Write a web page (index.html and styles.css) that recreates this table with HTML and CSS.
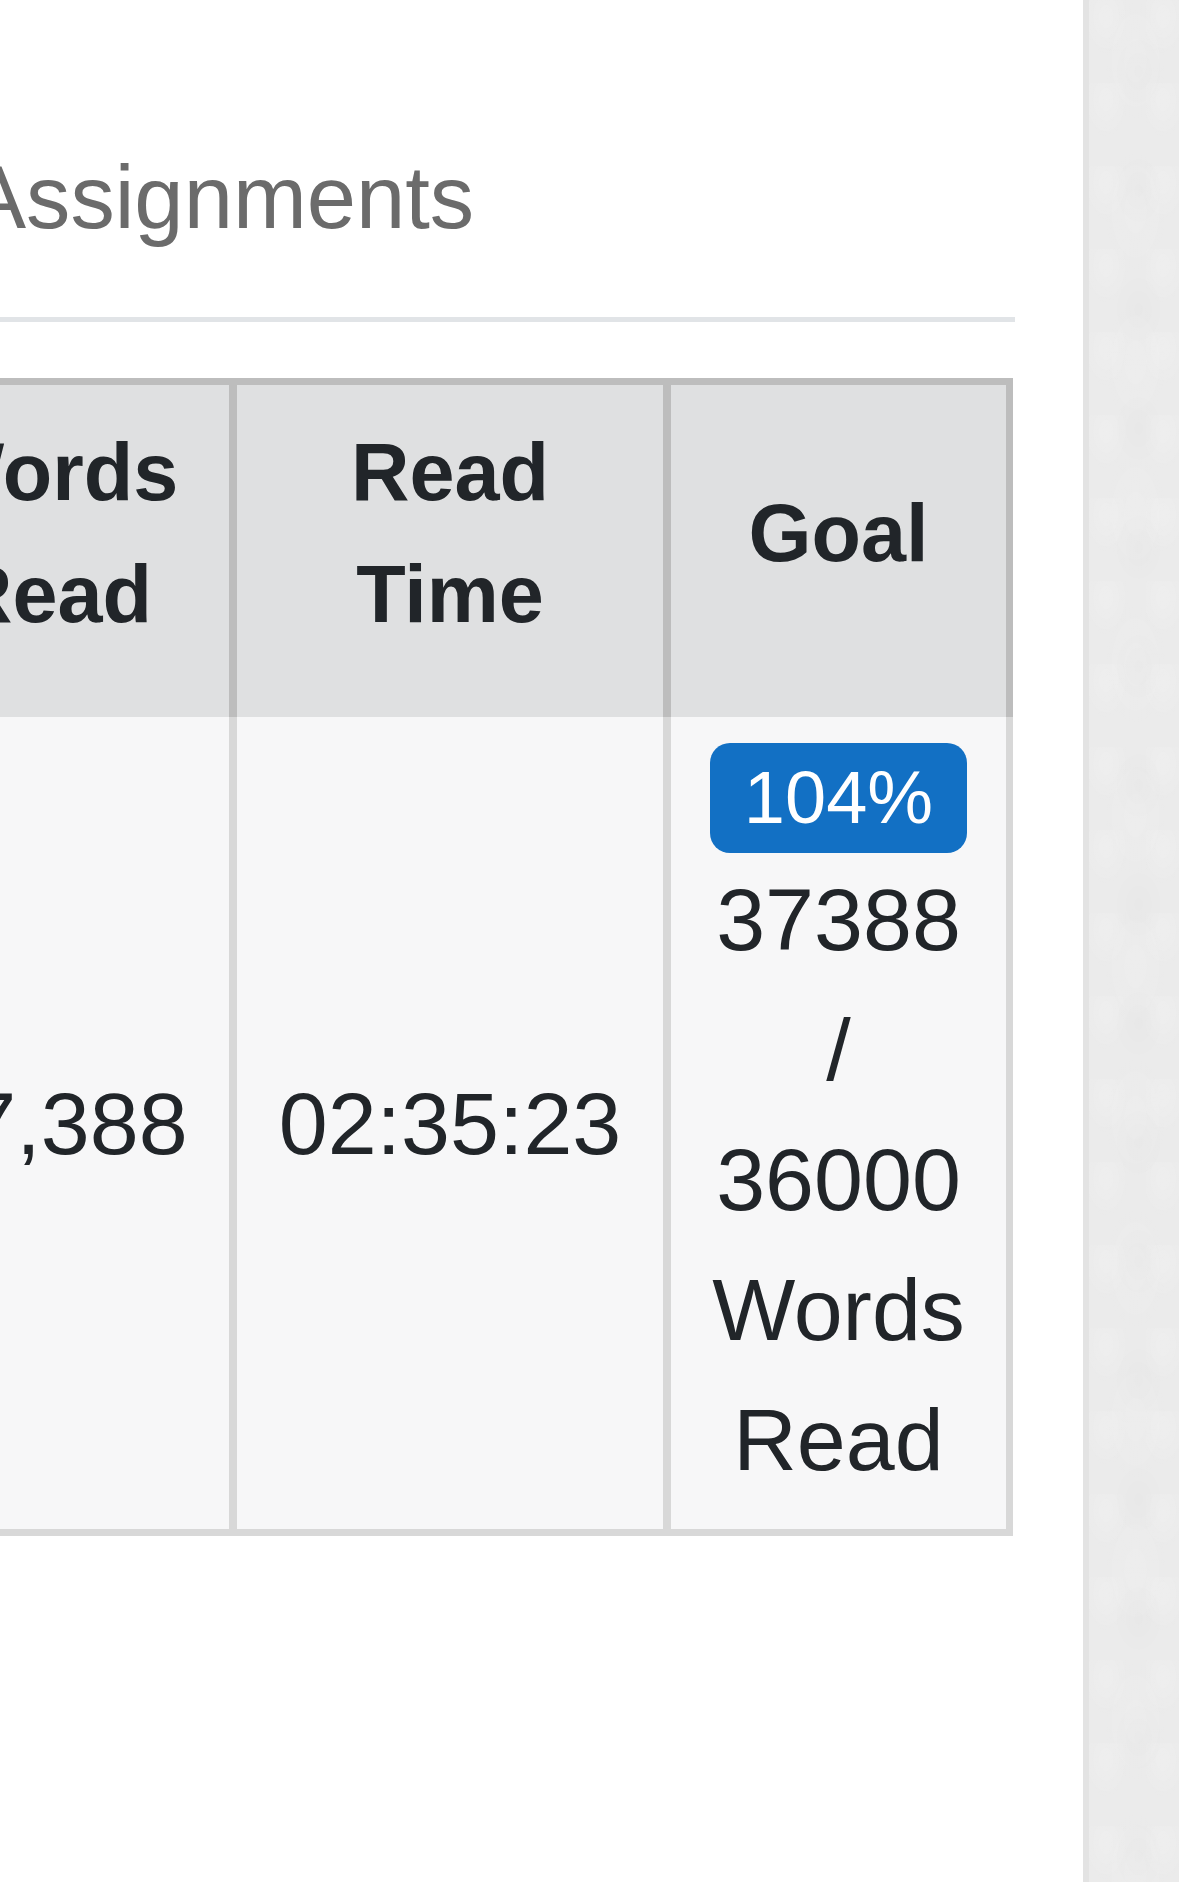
FILE: index.html
```html
<!DOCTYPE html>
<html lang="en">
<head>
<meta charset="utf-8">
<title>Assignments</title>
<link rel="stylesheet" href="styles.css">
</head>
<body>
<div class="page">
  <main class="main">
    <div class="content">
      <h2 class="title">Assignments</h2>
      <hr class="rule">
      <table class="stats">
        <thead>
          <tr>
            <th class="c1">Words Read</th>
            <th class="c2">Read Time</th>
            <th class="c3">Goal</th>
          </tr>
        </thead>
        <tbody>
          <tr>
            <td class="c1">37,388</td>
            <td class="c2">02:35:23</td>
            <td class="c3">
              <span class="badge">104%</span>
              37388 / 36000 Words Read
            </td>
          </tr>
        </tbody>
      </table>
    </div>
  </main>
  <aside class="sidebar"></aside>
</div>
</body>
</html>
```
FILE: styles.css
```css
html, body {
  margin: 0;
  padding: 0;
  background: #ffffff;
}

body {
  font-family: "Liberation Sans", Arial, sans-serif;
  color: #212529;
}

.page {
  display: flex;
  width: 1179px;
  height: 1882px;
  overflow: hidden;
}

.main {
  flex: 1;
  overflow: hidden;
  background: #ffffff;
}

.content {
  margin-left: -130px;
  width: 1143px;
  padding-top: 145px;
}

.title {
  margin: 0 0 0 97px;
  font-size: 88.6px;
  line-height: 105.6px;
  font-weight: 400;
  color: #6b6b6b;
  white-space: nowrap;
}

.rule {
  margin: 66px -2px 0 0;
  border: 0;
  height: 5px;
  background: #e1e4e7;
}

.stats {
  margin-top: 56px;
  width: 1143px;
  table-layout: fixed;
  border-collapse: separate;
  border-spacing: 0;
}

.stats th,
.stats td {
  box-sizing: border-box;
  text-align: center;
  vertical-align: middle;
  padding-left: 36px;
  padding-right: 36px;
}

.stats th {
  background: #dfe0e1;
  font-size: 81px;
  line-height: 122px;
  font-weight: 700;
  padding-top: 26px;
  padding-bottom: 62px;
  border-top: 7px solid #bdbdbd;
  border-right: 8px solid #bdbdbd;
}

.stats td {
  background: #f7f7f8;
  font-size: 88px;
  line-height: 130px;
  font-weight: 400;
  padding-top: 26px;
  padding-bottom: 24px;
  border-right: 8px solid #d8d8d8;
  border-bottom: 7px solid #d8d8d8;
}

.stats .c1 {
  width: 367px;
  border-left: 7px solid #bdbdbd;
}

.stats td.c1 {
  border-left-color: #d8d8d8;
}

.stats .c2 {
  width: 434px;
}

.stats .c3 {
  width: 342px;
  border-right-width: 7px;
}

.badge {
  display: block;
  width: fit-content;
  margin: 0 auto 2px;
  padding: 18px 34px;
  font-size: 74px;
  line-height: 74px;
  font-weight: 400;
  color: #ffffff;
  background: #1270c4;
  border-radius: 20px;
}

.sidebar {
  width: 96px;
  flex: none;
  background-color: #ebebeb;
  background-image:
    radial-gradient(ellipse at 30% 20%, rgba(255,255,255,0.18) 0, rgba(255,255,255,0) 22px),
    radial-gradient(ellipse at 70% 60%, rgba(0,0,0,0.012) 0, rgba(0,0,0,0) 26px),
    radial-gradient(ellipse at 50% 40%, rgba(255,255,255,0.12) 0, rgba(255,255,255,0) 30px);
  background-size: 57px 83px, 71px 119px, 93px 151px;
  border-left: 6px solid #e3e3e3;
  box-sizing: border-box;
}
```
